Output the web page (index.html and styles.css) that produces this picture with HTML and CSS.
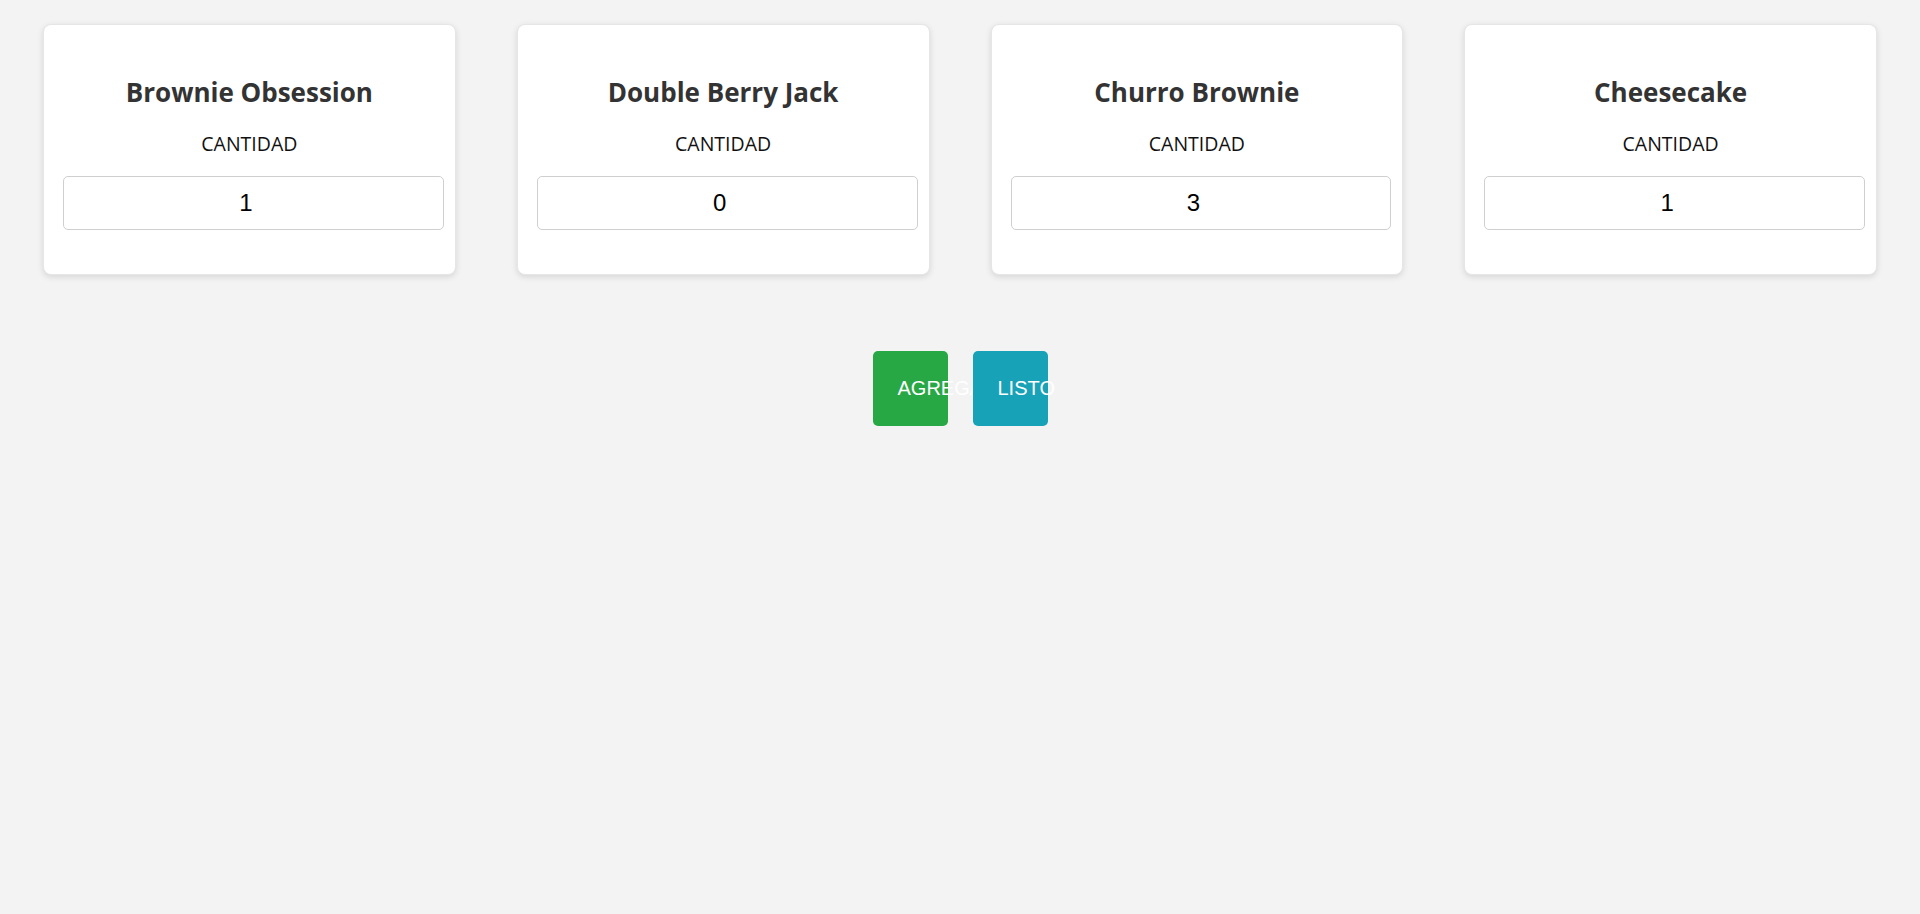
FILE: index.html
```html
<!DOCTYPE html>
<html lang="es">
<head>
<meta charset="utf-8">
<title>Pedido</title>
<link rel="stylesheet" href="styles.css">
</head>
<body>
<main class="page">
  <section class="cards">
    <div class="card">
      <h3 class="card-title">Brownie Obsession</h3>
      <label class="qty-label">CANTIDAD</label>
      <input class="qty-input" type="number" value="1">
    </div>
    <div class="card">
      <h3 class="card-title">Double Berry Jack</h3>
      <label class="qty-label">CANTIDAD</label>
      <input class="qty-input" type="number" value="0">
    </div>
    <div class="card">
      <h3 class="card-title">Churro Brownie</h3>
      <label class="qty-label">CANTIDAD</label>
      <input class="qty-input" type="number" value="3">
    </div>
    <div class="card">
      <h3 class="card-title">Cheesecake</h3>
      <label class="qty-label">CANTIDAD</label>
      <input class="qty-input" type="number" value="1">
    </div>
  </section>
  <div class="actions">
    <button class="btn btn-add" type="button">AGREGAR</button>
    <button class="btn btn-done" type="button">LISTO</button>
  </div>
</main>
</body>
</html>
```

FILE: styles.css
```css
html, body {
  margin: 0;
  padding: 0;
  background: #f3f3f3;
}

body {
  font-family: "Open Sans", "Noto Sans", sans-serif;
  color: #000;
}

.page {
  padding-top: 24px;
}

.cards {
  display: grid;
  grid-template-columns: repeat(4, 1fr);
  column-gap: 61px;
  padding: 0 43px;
}

.card {
  background: #fff;
  border: 1px solid #e6e6e6;
  border-radius: 8px;
  box-shadow: 0 2px 6px rgba(0, 0, 0, 0.12);
  padding: 19px 19px 44px;
  text-align: center;
}

.card-title {
  margin: 33px 0 0;
  font-size: 26px;
  line-height: 1.2;
  font-weight: 700;
  color: #333;
}

.qty-label {
  display: block;
  margin-top: 23px;
  font-size: 19.5px;
  line-height: 1.3;
  color: #111;
}

.qty-input {
  display: block;
  box-sizing: content-box;
  width: 100%;
  margin: 19px 0 0;
  padding: 12px 3px;
  border: 1px solid #cfcfcf;
  border-radius: 5px;
  font-family: "Liberation Sans", Arial, sans-serif;
  font-size: 24px;
  line-height: 28px;
  height: 28px;
  text-align: center;
  color: #000;
  background: #fff;
}

.actions {
  display: flex;
  justify-content: center;
  gap: 25px;
  margin-top: 76px;
}

.btn {
  width: 75px;
  height: 75px;
  padding: 0 0 0 25px;
  border: none;
  border-radius: 5px;
  font-family: "Liberation Sans", Arial, sans-serif;
  font-size: 20px;
  color: #fff;
  text-align: left;
  white-space: nowrap;
  overflow: visible;
  position: relative;
}

.btn-add {
  background: #28a745;
}

.btn-done {
  background: #17a2b8;
}
```
